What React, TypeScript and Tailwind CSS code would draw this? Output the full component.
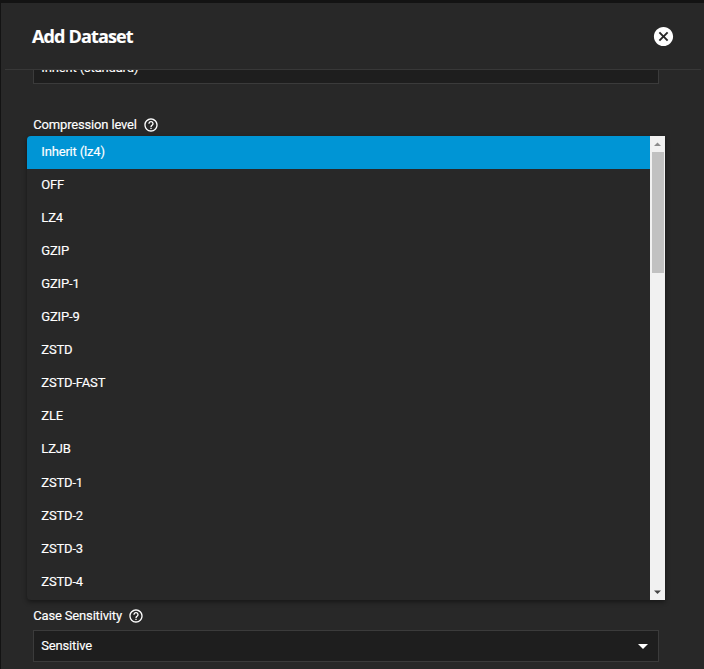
import { MdCancel, MdHelpOutline } from "react-icons/md";

const levels = [
  "Inherit (lz4)", "OFF", "LZ4", "GZIP", "GZIP-1", "GZIP-9", "ZSTD",
  "ZSTD-FAST", "ZLE", "LZJB", "ZSTD-1", "ZSTD-2", "ZSTD-3", "ZSTD-4",
];

function FieldLabel({ text }: { text: string }) {
  return (
    <div className="flex h-4 items-center gap-[6px] pl-[0.3px] leading-4">
      <span className="whitespace-nowrap">{text}</span>
      <MdHelpOutline size={16} className="-mt-px shrink-0" />
    </div>
  );
}

function Scrollbar() {
  return (
    <div className="flex w-[15px] shrink-0 flex-col items-center bg-[#f1f1f1]">
      <svg width="15" height="15" viewBox="0 0 15 15" className="shrink-0">
        <path d="M4 10h7L7.5 6.5z" fill="#8b8b8b" />
      </svg>
      <div className="mt-[1px] h-[121px] w-3 bg-[#c1c1c1]" />
      <div className="grow" />
      <svg width="15" height="15" viewBox="0 0 15 15" className="shrink-0">
        <path d="M4 5.5h7L7.5 9z" fill="#454545" />
      </svg>
    </div>
  );
}

function LevelMenu() {
  return (
    <div className="absolute top-[19px] -left-[6px] z-10 flex h-[464px] w-[638px] overflow-hidden rounded-l-[4px] bg-[#282828] shadow-[0_2px_5px_rgba(0,0,0,0.45)]">
      <div className="grow">
        {levels.map((level, i) => (
          <div
            key={level}
            className={
              "flex h-[33.08px] items-center pb-[2px] pl-[14.3px] " +
              (i === 0 ? "bg-[#0095d5]" : "")
            }
          >
            {level}
          </div>
        ))}
      </div>
      <Scrollbar />
    </div>
  );
}

export default function App() {
  return (
    <div className="h-[669px] w-[704px] overflow-hidden border-t-[3px] border-l border-t-[#131313] border-l-[#131313] bg-[#282828] font-['Roboto',sans-serif] text-[13px] tracking-[-0.17px] text-white [-webkit-text-stroke:0.15px_white]">
      <header className="mr-[3px] ml-1 flex h-[67px] items-center justify-between border-b border-[#383838] pr-[26px] pl-[27px]">
        <h1 className="font-['Open_Sans',sans-serif] text-[18px] font-bold tracking-[-0.85px]">Add Dataset</h1>
        <MdCancel size={23} />
      </header>
      <main className="pr-[45px] pl-8">
        <div className="h-[14px] overflow-hidden border-x border-b border-[#3b3b3b] bg-[#1e1e1e]">
          <div className="-mt-[10px] pl-[7.3px] leading-4">Inherit (standard)</div>
        </div>
        <section className="relative mt-[33px] h-[491px]">
          <FieldLabel text="Compression level" />
          <LevelMenu />
        </section>
        <section>
          <FieldLabel text="Case Sensitivity" />
          <div className="mt-[6px] flex h-8 items-center justify-between border border-[#3b3b3b] bg-[#1e1e1e] pr-[10px] pl-[7.3px]">
            <span>Sensitive</span>
            <svg width="10" height="5" viewBox="0 0 10 5">
              <path d="M0 0h10L5 5z" fill="white" />
            </svg>
          </div>
        </section>
      </main>
    </div>
  );
}
